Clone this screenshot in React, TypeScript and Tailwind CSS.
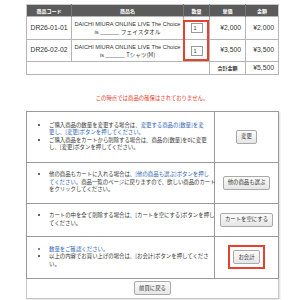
import React from "react";

const jp = { fontFamily: '"Noto Sans CJK JP", "Liberation Sans", sans-serif' };
const lat = { fontFamily: '"Liberation Sans", "Noto Sans CJK JP", sans-serif' };

type Item = { code: string; name: string; qty: number; price: string; total: string };

const items: Item[] = [
    { code: "DR26-01-01", name: "フェイスタオル", qty: 1, price: "¥2,000", total: "¥2,000" },
    { code: "DR26-02-02", name: "Tシャツ(M)", qty: 1, price: "¥3,500", total: "¥3,500" },
];

function Btn({ children }: { children: React.ReactNode }) {
    return (
        <button
            className="h-[14px] px-[4px] border border-[#a9a9a9] rounded-[2px] bg-gradient-to-b from-[#fafafa] to-[#e6e6e6] text-[5.4px] leading-[7px] text-[#333] whitespace-nowrap"
            style={jp}
        >
            {children}
        </button>
    );
}

const blue = "text-[#2f5fb3]";

export default function App() {
    return (
        <div className="w-[293px] h-[300px] bg-white overflow-hidden pl-[26px] pt-[4px]" style={jp}>
            {/* cart table */}
            <div className="relative w-[252px]">
                <table className="w-[252px] table-fixed border-collapse border border-[#c8c8c8]">
                    <colgroup>
                        <col className="w-[45px]" />
                        <col className="w-[112px]" />
                        <col className="w-[26px]" />
                        <col className="w-[36px]" />
                        <col className="w-[33px]" />
                    </colgroup>
                    <thead>
                        <tr className="h-[12px] bg-[#5b5b5b] text-white text-[5px] font-bold leading-[6px]">
                            <th className="border-r border-[#777]">商品コード</th>
                            <th className="border-r border-[#777]">商品名</th>
                            <th className="border-r border-[#777]">数量</th>
                            <th className="border-r border-[#777]">単価</th>
                            <th>金額</th>
                        </tr>
                    </thead>
                    <tbody className="text-[#333]">
                        {items.map((it, i) => (
                            <tr key={it.code} className={i === 0 ? "h-[23px]" : "h-[22px]"}>
                                <td className="border border-[#b5b5b5] text-center text-[6.8px]" style={lat}>{it.code}</td>
                                <td className="border border-[#b5b5b5] text-center text-[5.7px] leading-[8px]">
                                    <span style={lat}>DAICHI MIURA ONLINE LIVE The Choice</span>
                                    <br />
                                    <span style={lat}>is ______ </span>
                                    {it.name}
                                </td>
                                <td className="border border-[#b5b5b5] text-center">
                                    <div className="mx-auto w-[12px] h-[10px] border border-[#999] bg-white text-left pl-[2px] text-[5.5px] leading-[8px]" style={lat}>
                                        {it.qty}
                                    </div>
                                </td>
                                <td className="border border-[#b5b5b5] text-right pr-[4px] text-[6.8px]" style={lat}>{it.price}</td>
                                <td className="border border-[#b5b5b5] text-right pr-[4px] text-[6.8px]" style={lat}>{it.total}</td>
                            </tr>
                        ))}
                        <tr className="h-[13px]">
                            <td colSpan={3} className="border border-[#b5b5b5]"></td>
                            <td className="border border-[#b5b5b5] text-center text-[5px] font-bold">合計金額</td>
                            <td className="border border-[#b5b5b5] text-right pr-[4px] text-[6.8px]" style={lat}>¥5,500</td>
                        </tr>
                    </tbody>
                </table>
                {/* highlight around qty column */}
                <div className="absolute left-[157px] top-[16px] w-[26px] h-[41px] border-2 border-[#e5432f]"></div>
            </div>

            <p className="w-[252px] mt-[20px] text-center text-[5.4px] leading-[7.5px] text-[#e83a2c]">
                この時点では商品の確保はされておりません。
            </p>

            {/* action table */}
            <table className="mt-[8px] w-[252px] table-fixed border-collapse border border-[#c8c8c8] shadow-[1px_1px_2px_rgba(0,0,0,0.15)] text-[5.4px] leading-[7.5px] text-[#333]">
                <colgroup>
                    <col className="w-[188px]" />
                    <col className="w-[64px]" />
                </colgroup>
                <tbody>
                    <tr className="h-[51px]">
                        <td className="border border-[#9a9a9a] pl-[9px] pr-[2px] whitespace-nowrap">
                            <ul className="list-disc pl-[13px]">
                                <li>
                                    ご購入商品の数量を変更する場合は、<span className={blue}>変更する商品の[数量]を変<br />更し、[変更]ボタンを押してください。</span>
                                </li>
                                <li>
                                    ご購入商品をカートから削除する場合は、商品の[数量]を0に変更<br />し、[変更]ボタンを押してください。
                                </li>
                            </ul>
                        </td>
                        <td className="border border-[#9a9a9a] text-center"><Btn>変更</Btn></td>
                    </tr>
                    <tr className="h-[41px]">
                        <td className="border border-[#9a9a9a] pl-[9px] pr-[2px] whitespace-nowrap">
                            <ul className="list-disc pl-[13px]">
                                <li>
                                    他の商品もカートに入れる場合は、<span className={blue}>[他の商品も選ぶ]ボタンを押し<br />てください。</span>商品一覧のページに戻りますので、欲しい商品のカート<br />をクリックしてください。
                                </li>
                            </ul>
                        </td>
                        <td className="border border-[#9a9a9a] text-center"><Btn>他の商品も選ぶ</Btn></td>
                    </tr>
                    <tr className="h-[33px]">
                        <td className="border border-[#9a9a9a] pl-[9px] pr-[2px] whitespace-nowrap">
                            <ul className="list-disc pl-[13px]">
                                <li>
                                    カートの中を全て削除する場合は、[カートを空にする]ボタンを押し<br />てください。
                                </li>
                            </ul>
                        </td>
                        <td className="border border-[#9a9a9a] text-center"><Btn>カートを空にする</Btn></td>
                    </tr>
                    <tr className="h-[42px]">
                        <td className="border border-[#9a9a9a] pl-[9px] pr-[2px] whitespace-nowrap">
                            <ul className="list-disc pl-[13px]">
                                <li className={blue}>数量をご確認ください。</li>
                                <li>
                                    以上の内容でお買い上げの場合は、[お会計]ボタンを押してくださ<br />い。
                                </li>
                            </ul>
                        </td>
                        <td className="border border-[#9a9a9a] text-center">
                            <span className="inline-block p-[3px] border-2 border-[#e5432f]">
                                <Btn>お会計</Btn>
                            </span>
                        </td>
                    </tr>
                    <tr className="h-[20px]">
                        <td colSpan={2} className="border border-[#c8c8c8] text-center">
                            <Btn>前頁に戻る</Btn>
                        </td>
                    </tr>
                </tbody>
            </table>
        </div>
    );
}
